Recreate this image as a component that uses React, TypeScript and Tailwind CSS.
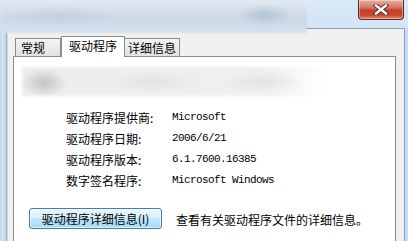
import React from "react";

const cjk = "font-['Noto_Sans_CJK_SC','Noto_Sans',sans-serif]";
const mono = "font-['Liberation_Mono',monospace]";

function CloseButton() {
  return (
    <div className="w-[46px] h-[20px] rounded-b-[4px] border border-t-0 border-[#5b2b22] bg-[linear-gradient(180deg,#eab0a3_0%,#d77260_40%,#c13f2a_55%,#c8472f_80%,#e08a74_100%)] flex items-center justify-center shadow-[inset_0_0_0_1px_rgba(255,255,255,0.35)]">
      <svg width="16" height="11" viewBox="0 0 16 11">
        <path d="M3 1.5 L13 9.5 M13 1.5 L3 9.5" stroke="#3a2a28" strokeWidth="4.2" strokeLinecap="square" />
        <path d="M3 1.5 L13 9.5 M13 1.5 L3 9.5" stroke="#ffffff" strokeWidth="2.4" strokeLinecap="square" />
      </svg>
    </div>
  );
}

function Tab({ label, selected, className }: { label: string; selected?: boolean; className: string }) {
  return (
    <div
      className={
        selected
          ? `relative z-10 h-[21px] -mb-px bg-white border border-b-0 border-[#898c95] text-[12px] leading-[18px] text-black ${className}`
          : `h-[18px] bg-[linear-gradient(180deg,#f3f3f3,#e2e2e2)] border border-b-0 border-[#898c95] text-[12px] leading-[18px] text-black ${className}`
      }
    >
      {label}
    </div>
  );
}

function Row({ label, value }: { label: string; value: string }) {
  return (
    <div className="flex h-[21px] items-center">
      <div className={`w-[106px] ${cjk} text-[12px] text-black`}>{label}</div>
      <div className={`${mono} text-[11px] tracking-[-0.6px] text-black`}>{value}</div>
    </div>
  );
}

export default function App() {
  return (
    <div className="relative w-[408px] h-[241px] overflow-hidden bg-[#d6e6f6] flex flex-col">
      {/* title bar */}
      <div className="h-[28px] flex justify-end pr-[4px] bg-[linear-gradient(180deg,#dbe9f7,#d3e4f5)]">
        <CloseButton />
      </div>
      {/* blurred title overlay */}
      <div className="absolute left-0 top-0 w-[307px] h-[33px] bg-[radial-gradient(ellipse_28px_11px_at_265px_15px,#b3c4d5,transparent),radial-gradient(ellipse_60px_10px_at_60px_16px,#c3d1df,transparent),linear-gradient(180deg,#e3ebf3_0%,#ccd9e6_55%,#d5e0eb_100%)] blur-[1px]" />

      {/* body */}
      <div className="flex flex-1 min-h-0">
        <div className="w-[6px] bg-[linear-gradient(90deg,#c2d9f1,#d3e4f6_50%,#bcd3eb)]" />
        <div className="w-px bg-[#9fb2c6]" />
        <div className="flex-1 flex flex-col bg-[#f0f0f0] border-t border-l border-r border-[#8e9fb2] border-l-[#d8d8d8] pl-[5px] pr-[8px]">
          {/* tabs */}
          <div className="flex items-end h-[20px] mt-[7px] pl-[2px] relative z-10">
            <Tab label="常规" className={`${cjk} w-[46px] pl-[5px]`} />
            <Tab label="驱动程序" selected className={`${cjk} w-[64px] text-center leading-[17px]`} />
            <Tab label="详细信息" className={`${cjk} w-[55px] text-center border-l-0`} />
          </div>
          {/* panel */}
          <div className="flex-1 bg-white border border-b-0 border-[#898c95] pl-[8px] pt-[10px]">
            <div className="w-[305px] h-[29px] blur-[1.5px] bg-[radial-gradient(ellipse_22px_14px_at_22px_16px,#c2c2c2,transparent),radial-gradient(ellipse_40px_10px_at_130px_15px,#e2e2e2,transparent),radial-gradient(ellipse_40px_10px_at_240px_15px,#e2e2e2,transparent),linear-gradient(90deg,#ececec_0%,#efefef_80%,#ffffff_100%)]" />
            <div className="pl-[44px] mt-[11px] flex flex-col">
              <Row label="驱动程序提供商:" value="Microsoft" />
              <Row label="驱动程序日期:" value="2006/6/21" />
              <Row label="驱动程序版本:" value="6.1.7600.16385" />
              <Row label="数字签名程序:" value="Microsoft Windows" />
            </div>
            <div className="flex items-center mt-[17px] pl-[7px]">
              <div className={`w-[133px] h-[21px] rounded-[3px] border border-[#3c7fb1] bg-[linear-gradient(180deg,#eaf6fd_0%,#d9f0fc_49%,#bee6fd_50%,#a7d9f5_100%)] shadow-[inset_0_0_0_1px_rgba(255,255,255,0.6)] flex items-center justify-center ${cjk} text-[12px] text-black`}>
                驱动程序详细信息(I)
              </div>
              <div className={`ml-[14px] mt-[3px] ${cjk} text-[12px] text-black`}>
                查看有关驱动程序文件的详细信息。
              </div>
            </div>
          </div>
        </div>
        <div className="w-[3px] bg-[#c6dcf2]" />
      </div>
    </div>
  );
}
